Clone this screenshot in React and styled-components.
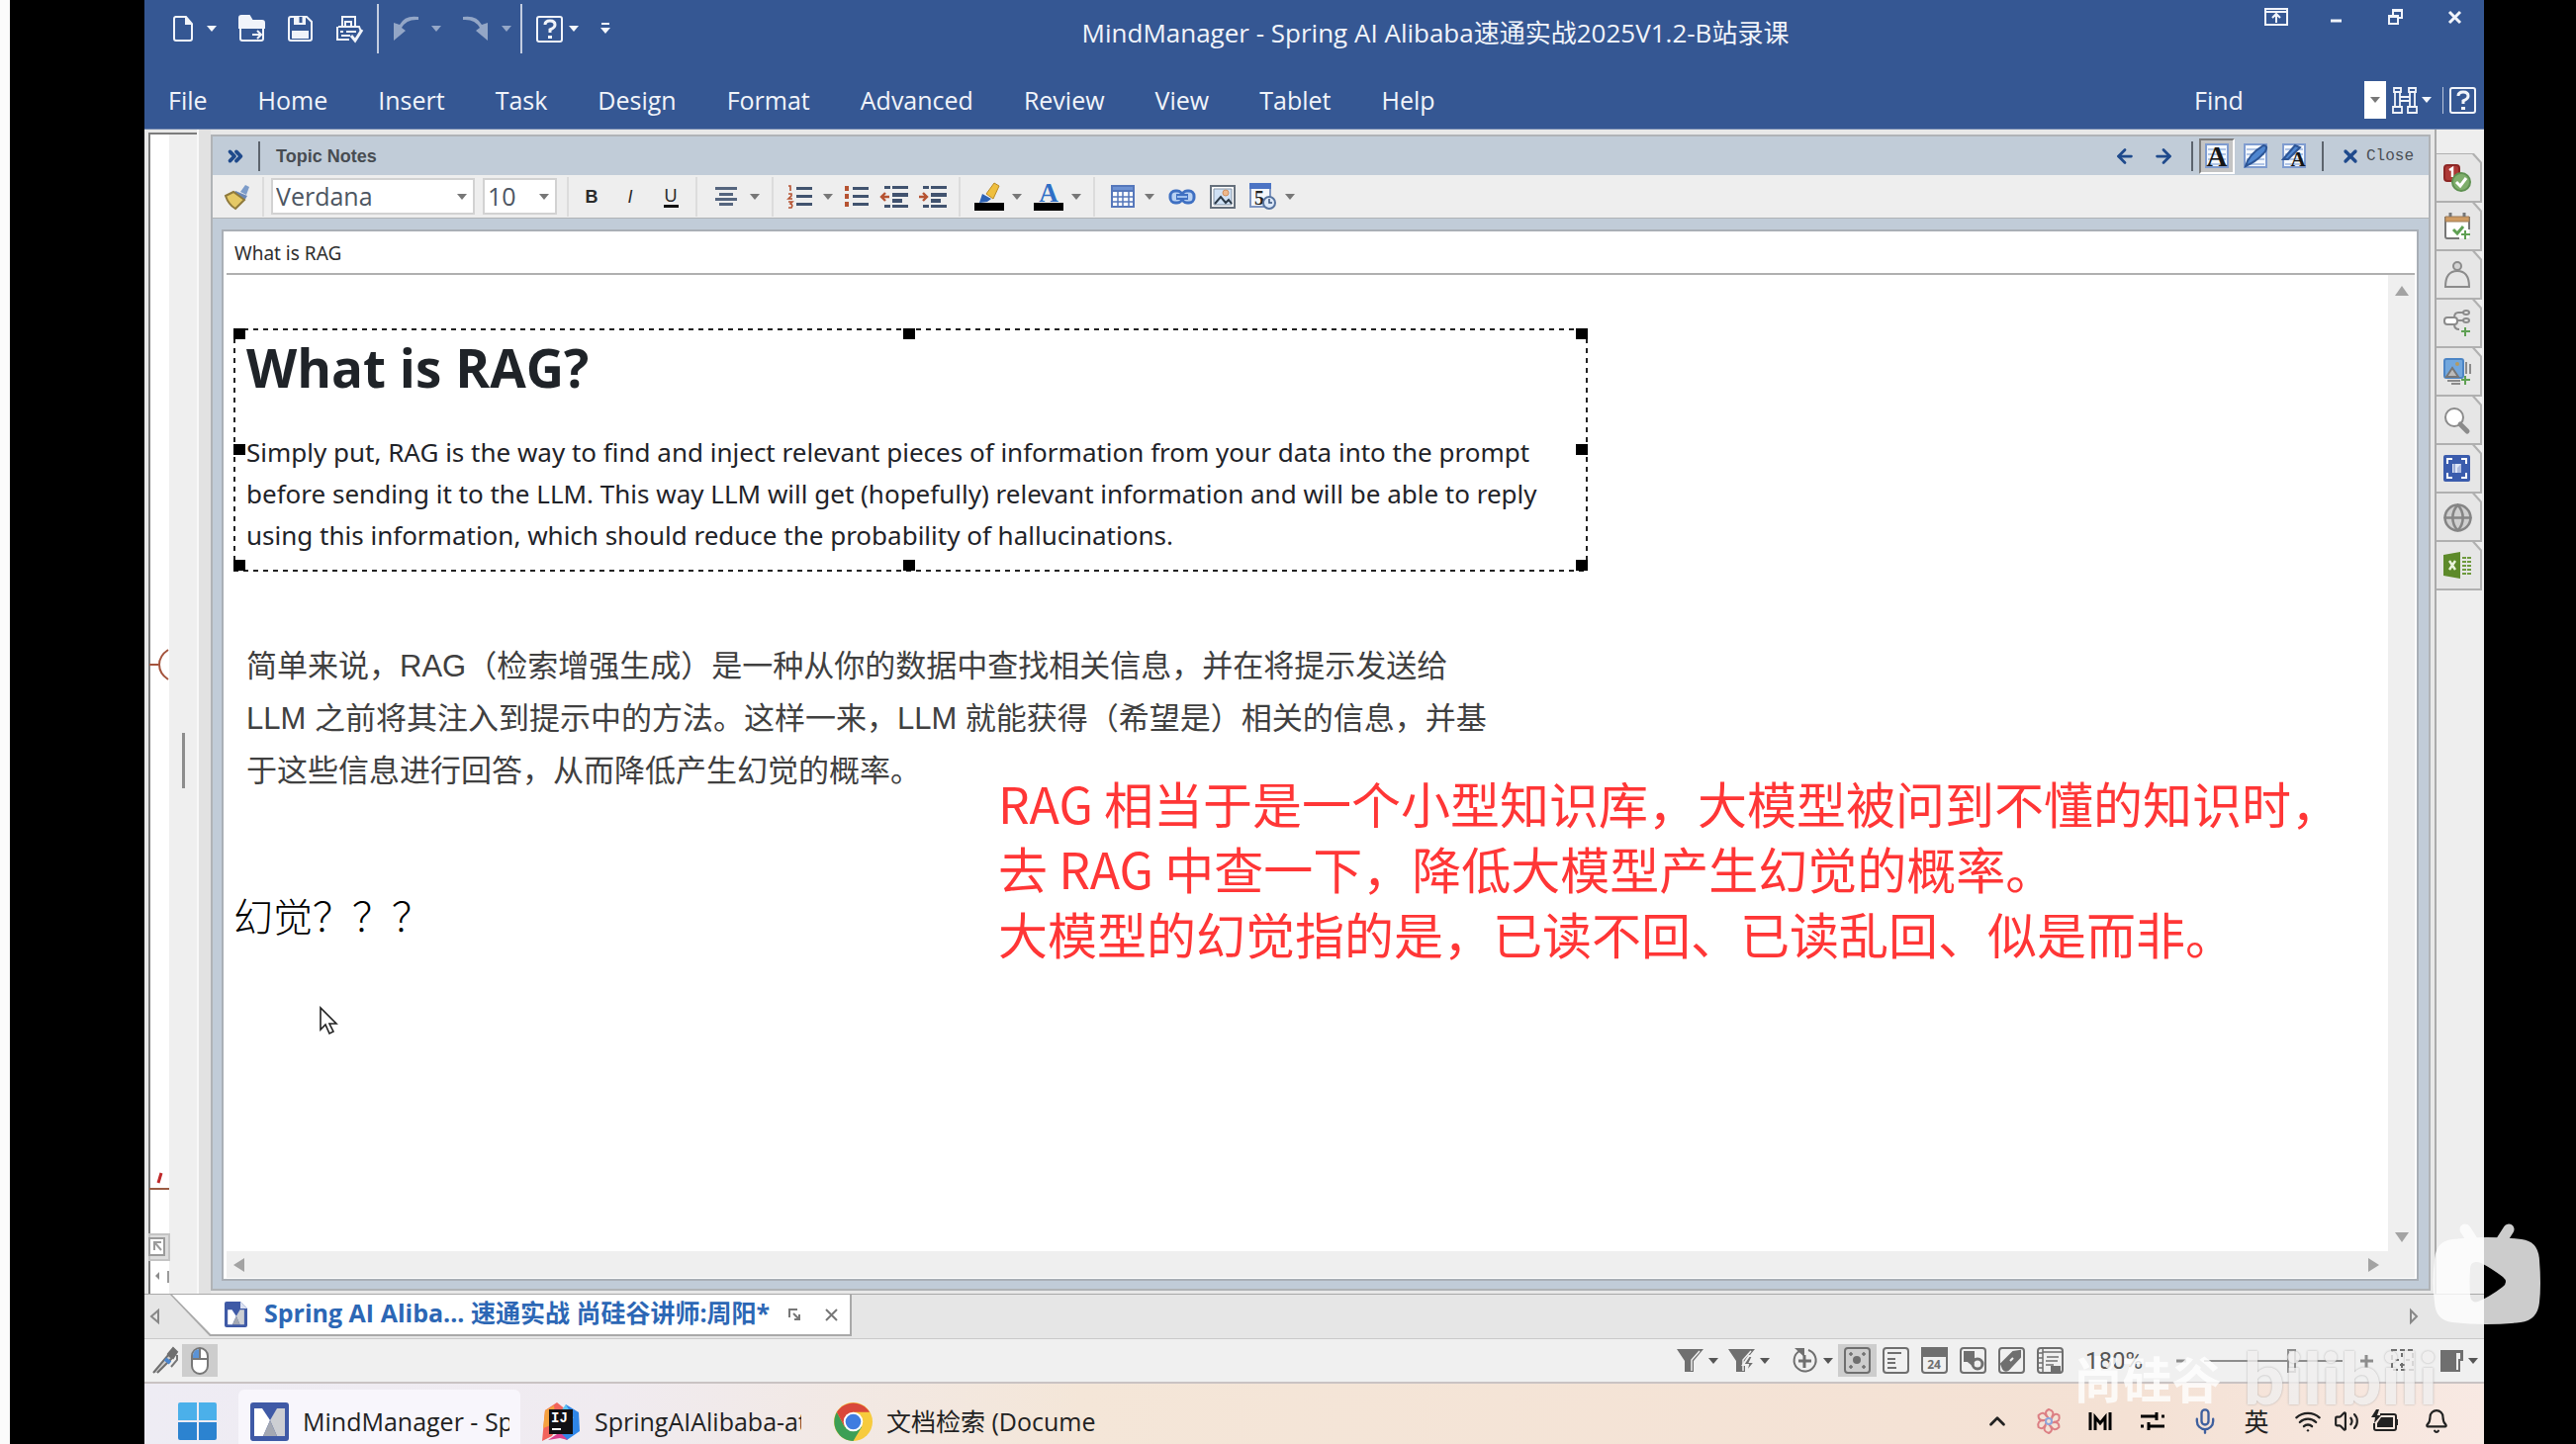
import React from 'react'
import styled, { createGlobalStyle } from 'styled-components'
import { ArrowLeft, ArrowRight, ChevronsRight, ChevronUp, X, Mic, Wifi, Volume2, Bell, Globe } from 'lucide-react'

const GlobalStyle = createGlobalStyle`
*{ box-sizing:border-box; }
body{
  margin:0;
  background:#000;
  font-family:"Open Sans","Noto Sans CJK SC",sans-serif;
}
button,input,select{
  font-family:inherit;
  color:inherit;
  background:none;
  border:0;
  border-radius:0;
  padding:0;
  margin:0;
}
svg{ display:block; flex:none; overflow:visible; }
`

const Page = styled.div`
position:relative;
display:flex;
min-height:100vh;
overflow:hidden;
background:#000;
padding-right:93px;
`
const PageEdge = styled.div`
width:10px;
background:#fbfbfb;
margin-right:136px;
`
const Window = styled.div`
flex:1;
min-width:0;
display:flex;
flex-direction:column;
background:#e6e6e6;
`

/* header */
const Header = styled.header`
height:131px;
background:#355793;
color:#f1f4fa;
border-bottom:1px solid #6f85ae;
`
const TitleBar = styled.div`
display:flex;
height:72px;
`
const QuickGroup = styled.div`
display:flex;
align-items:center;
gap:22px;
height:50px;
margin-top:4px;
padding:0 ${props => props.$end || 14}px 0 ${props => props.$start || 14}px;
border-left:${props => (props.$start ? 0 : 2)}px solid #c3cde0;
`
const Split = styled.button`
display:flex;
align-items:center;
gap:${props => props.$gap || 13}px;
opacity:${props => (props.disabled ? 0.5 : 1)};
`
const Title = styled.h1`
flex:1;
margin:14px 0 0;
text-align:center;
font-size:26px;
line-height:38px;
font-weight:400;
white-space:nowrap;
`
const WinButton = styled.button`
width:60px;
height:34px;
display:flex;
align-items:center;
justify-content:center;
`
const MenuBar = styled.nav`
display:flex;
align-items:center;
height:58px;
padding:0 8px 0 24px;
`
const MenuItem = styled.button`
font-size:25px;
line-height:34px;
margin-right:51px;
`
const FindInput = styled.input`
margin-left:auto;
width:172px;
font-size:25px;
line-height:34px;
outline:0;
`
const FindDrop = styled.button`
width:22px;
height:38px;
background:#fff;
display:flex;
align-items:center;
justify-content:center;
margin-right:6px;
`
const HelpButton = styled.button`
margin-left:11px;
padding-left:6px;
border-left:1px solid #b8c4dc;
`
const Caret = styled.span`
width:0;
height:0;
flex:none;
border-left:5px solid transparent;
border-right:5px solid transparent;
border-top:6px solid ${props => props.$color || '#777'};
`

/* work area */
const Work = styled.div`
flex:1;
display:flex;
min-height:0;
padding-left:4px;
background:#e8e8e8;
`
const MapStrip = styled.div`
position:relative;
width:49px;
margin-top:3px;
background:#fff;
border-left:2px solid #7c7c7c;
border-top:2px solid #7c7c7c;
display:flex;
justify-content:flex-end;
`
const MapScroll = styled.div`
width:28px;
background:#efefef;
display:flex;
align-items:center;
justify-content:center;
padding-top:94px;
`
const Grip = styled.div`
width:3px;
height:56px;
background:#8d8d8d;
`
const MapDrawing = styled.svg`
position:absolute;
left:-1px;
top:${props => props.$top};
`
const Splitter = styled.div`
width:14px;
background:#e2e2e2;
border-left:2px solid #f8f8f8;
`
const Panel = styled.section`
flex:1;
min-width:0;
margin:5px 4px 3px 0;
display:flex;
flex-direction:column;
background:#c1ccd8;
border:2px solid #b0b3b6;
`
const PanelHead = styled.div`
display:flex;
align-items:center;
height:39px;
padding:0 15px 0 12px;
color:#1f4a8c;
`
const PanelTitle = styled.h2`
flex:1;
margin:0 0 0 12px;
padding-left:16px;
border-left:2px solid #5c646d;
font:700 18px/30px "Liberation Sans",sans-serif;
color:#474c52;
`
const HeadButton = styled.button`
display:flex;
align-items:center;
justify-content:center;
width:36px;
height:36px;
margin:0 1px 0 2px;
${props => props.$on && 'background:#c4c4c4; border:2px solid #fff; border-top-color:#7d7d7d; border-left-color:#7d7d7d;'}
`
const HeadRule = styled.span`
width:2px;
height:30px;
background:#5c646d;
margin:0 ${props => props.$right || 4}px 0 9px;
`
const CloseButton = styled.button`
display:flex;
align-items:center;
gap:6px;
font:16px/24px "Liberation Mono",monospace;
span{ color:#4a4f55; }
svg{ color:#1f4a8c; }
`
const Toolbar = styled.div`
display:flex;
align-items:center;
height:44px;
background:#eee;
border-bottom:1px solid #b0b3b6;
`
const ToolGroup = styled.div`
display:flex;
align-items:center;
height:40px;
gap:${props => props.$gap || 12}px;
padding:0 ${props => props.$end || 12}px 0 ${props => props.$start || 14}px;
border-left:${props => (props.$first ? 0 : 2)}px solid #dcdcdc;
`
const SelectBox = styled.label`
position:relative;
width:${props => props.$w}px;
height:37px;
background:#fff;
border:2px solid #d2d2d2;
color:#4d5662;
select{
  appearance:none;
  width:100%;
  height:33px;
  padding-left:3px;
  font-size:25px;
  line-height:33px;
}
${Caret}{
  position:absolute;
  right:6px;
  top:14px;
  pointer-events:none;
}
`
const TextTool = styled.button`
width:${props => props.$w}px;
font:${props => props.$font} 18px/20px "Liberation Sans",sans-serif;
color:#2b2b2b;
span{
  display:inline-block;
  padding:0 1px;
  ${props => props.$under && 'border-bottom:3px solid #111; line-height:17px;'}
}
`
const Sheet = styled.div`
position:relative;
flex:1;
margin:11px 10px 8px 9px;
border:2px solid #a9afb6;
background:#fff;
display:grid;
grid-template-columns:1fr 27px;
grid-template-rows:44px 1fr 27px;
padding:0 2px 1px 3px;
`
const NoteTitle = styled.div`
grid-column:1 / 3;
border-bottom:2px solid #b0b0b0;
padding-left:8px;
font-family:"Noto Sans",sans-serif;
font-size:19px;
line-height:44px;
color:#2e2e2e;
`
const Note = styled.article`
position:relative;
padding:54px 0 0 7px;
`
const Selection = styled.div`
position:relative;
width:1369px;
height:246px;
padding:8px 13px;
color:#1f2328;
background:
  repeating-linear-gradient(90deg,#222 0 5px,transparent 5px 10px) 0 0 / 100% 2px no-repeat,
  repeating-linear-gradient(90deg,#222 0 5px,transparent 5px 10px) 0 100% / 100% 2px no-repeat,
  repeating-linear-gradient(#222 0 5px,transparent 5px 10px) 0 0 / 2px 100% no-repeat,
  repeating-linear-gradient(#222 0 5px,transparent 5px 10px) 100% 0 / 2px 100% no-repeat;
h3{
  margin:0;
  font-size:53px;
  line-height:64px;
}
p{
  margin:32px 0 0;
  font-family:"Noto Sans",sans-serif;
  font-size:26px;
  line-height:42px;
  white-space:nowrap;
}
`
const Handle = styled.i`
position:absolute;
width:12px;
height:11px;
background:#000;
left:${props => props.$x};
top:${props => props.$y};
`
const Translation = styled.p`
margin:69px 0 0 13px;
font:31px/53px "Liberation Sans","Noto Sans CJK SC",sans-serif;
color:#404040;
white-space:nowrap;
`
const Question = styled.p`
margin:91px 0 0;
font:300 40px/56px "Noto Sans CJK SC",sans-serif;
color:#000;
`
const Remark = styled.p`
position:absolute;
left:780px;
top:500px;
margin:0;
font:50px/66px "Noto Sans CJK SC",sans-serif;
color:#ff3636;
white-space:nowrap;
`
const Cursor = styled.svg`
position:absolute;
left:94px;
top:739px;
`
const VScroll = styled.div`
background:#efefef;
display:flex;
flex-direction:column;
align-items:center;
justify-content:space-between;
padding:11px 0 9px;
`
const HScroll = styled.div`
grid-column:1 / 3;
background:#efefef;
display:flex;
align-items:center;
justify-content:space-between;
padding:0 36px 0 7px;
`

/* task pane tabs */
const SideTabs = styled.aside`
width:50px;
background:#eee;
border-left:2px solid #ababab;
padding-top:24px;
`
const SideTab = styled.button`
position:relative;
display:flex;
align-items:center;
justify-content:center;
width:46px;
height:50px;
margin-bottom:-1px;
padding-right:4px;
background:#b0b0b0;
clip-path:polygon(0 0,38px 0,100% 9px,100% 100%,0 100%);
&:before{
  content:"";
  position:absolute;
  left:0;
  top:1px;
  right:2px;
  bottom:2px;
  background:#e6e6e6;
  clip-path:polygon(0 0,36px 0,100% 9px,100% 100%,0 100%);
}
svg{ position:relative; }
`

/* document tabs, status bar */
const DocTabs = styled.div`
display:flex;
align-items:flex-start;
height:46px;
border-top:1px solid #a9a9a9;
border-bottom:1px solid #c9c9c9;
padding-right:66px;
button{ align-self:center; }
`
const DocTab = styled.div`
display:flex;
align-items:center;
height:42px;
margin:0 auto 0 8px;
padding:0 2px 2px 0;
background:#a9a9a9;
clip-path:polygon(0 0,100% 0,100% 100%,40px 100%);
`
const DocTabInner = styled.div`
display:flex;
align-items:center;
height:100%;
padding:0 12px 0 55px;
background:#fff;
clip-path:polygon(2px 0,100% 0,100% 100%,41px 100%);
a{
  margin:0 18px 4px 17px;
  font-size:25px;
  line-height:36px;
  font-weight:700;
  color:#2c67b5;
  text-decoration:none;
}
button{ margin-right:24px; }
button:last-child{ margin-right:0; }
`
const StatusBar = styled.div`
display:flex;
align-items:center;
height:45px;
background:#f0f0f0;
border-bottom:2px solid #c9c3c3;
padding:0 6px 0 4px;
`
const StatusButton = styled.button`
display:flex;
align-items:center;
justify-content:center;
gap:5px;
height:33px;
padding:0 ${props => props.$pad || 0}px;
background:${props => (props.$on ? '#cdcdcd' : 'none')};
`
const StatusGroup = styled.div`
display:flex;
align-items:center;
gap:${props => props.$gap || 0}px;
margin-left:${props => props.$start || 0}px;
`
const Spacer = styled.div`
flex:1;
`
const Zoom = styled.div`
display:flex;
align-items:center;
margin:0 18px 0 16px;
gap:18px;
color:#555;
output{
  width:74px;
  font:24px/30px Roboto,sans-serif;
}
`
const Slider = styled.input`
appearance:none;
width:140px;
height:24px;
background:linear-gradient(#8d8d8d,#8d8d8d) center / 100% 2px no-repeat;
&::-webkit-slider-thumb{
  appearance:none;
  width:9px;
  height:24px;
  background:#f0f0f0;
  border:2px solid #8d8d8d;
}
`

/* taskbar */
const TaskBar = styled.footer`
display:flex;
align-items:center;
height:61px;
overflow:hidden;
padding:15px 22px 0 22px;
background:linear-gradient(90deg,#eeecf4 0,#f0ebf0 20%,#f4e6d8 40%,#f4e1d4 85%,#f8e9e3 100%);
color:#222;
`
const StartButton = styled.button`
padding:0 21px 0 12px;
`
const TaskLink = styled.a`
display:flex;
align-items:center;
gap:14px;
flex:none;
width:${props => props.$w || 285}px;
height:64px;
margin-right:10px;
padding:0 11px 0 12px;
border-radius:6px 6px 0 0;
background:${props => (props.$on ? '#f8f6fc' : 'none')};
color:#222;
text-decoration:none;
font-size:25px;
line-height:34px;
white-space:nowrap;
span{
  overflow:hidden;
}
`
const Tray = styled.div`
margin-left:auto;
display:flex;
align-items:center;
`
const TrayButton = styled.button`
display:flex;
align-items:center;
justify-content:center;
width:${props => props.$w || 52}px;
height:44px;
font-size:25px;
line-height:34px;
`

/* player overlay */
const Badge = styled.svg`
position:absolute;
right:35px;
bottom:120px;
`
const Watermark = styled.div`
position:absolute;
right:140px;
bottom:22px;
display:flex;
align-items:center;
gap:22px;
color:#fff;
opacity:0.8;
font:700 50px/60px "Noto Sans CJK SC",sans-serif;
pointer-events:none;
em{
  color:#f0efef;
  font:normal 900 73px/92px Lato,sans-serif;
  text-shadow:0 0 2px #999;
}
`

const Icon = ({ w = 26, h = 26, box, children, ...rest }) => (
  <svg width={w} height={h} viewBox={box || `0 0 ${w} ${h}`} fill='none' stroke='currentColor' strokeWidth='2' aria-hidden='true' {...rest}>
    {children}
  </svg>
)

const White = '#f4f7fc'

const NewIcon = () => (
  <Icon w={22} h={28}><path d='M3 2h11l6 7v15q0 2-2 2H4q-2 0-2-2V4q0-2 2-2z' /><path d='M13 1v9h8z' fill='currentColor' stroke='none' /></Icon>
)
const OpenIcon = () => (
  <Icon w={27} h={28}>
    <path d='M1 3q0-2 2-2h8l3 5h10q2 0 2 2v5H1z' fill='currentColor' />
    <path d='M2 13v11q0 2 2 2h19q2 0 2-2V13M14 20h9M19 16l4 4-4 4' />
  </Icon>
)
const SaveIcon = () => (
  <Icon w={27} h={28}>
    <path d='M2 4q0-2 2-2h16l5 5v17q0 2-2 2H4q-2 0-2-2z' />
    <path d='M7 1h12v9H7zM5 16h17v8H5z' fill='currentColor' stroke='none' /><path d='M14 2v6' stroke='#355793' strokeWidth='3' />
  </Icon>
)
const PrintIcon = () => (
  <Icon w={28} h={28}>
    <path d='M7 12V2h13v10M3 12h21l2 5M2 12v13h12M10 11V7h6v4M5 17h3M11 17h10M6 21h9' /><path d='M16 21l4 5 7-11' strokeWidth='3' />
  </Icon>
)
const UndoIcon = ({ flip }) => (
  <Icon w={26} h={28}><path d='M26 2Q12 0 7 10L1 8v18l12-10-4-3q5-9 17-8z' fill='currentColor' stroke='none' transform={flip ? 'translate(26 0) scale(-1 1)' : undefined} /></Icon>
)
const HelpIcon = () => (
  <Icon w={27} h={27}><rect x='1' y='1' width='25' height='25' rx='2' /><path d='M9 9q0-4 5-4t5 4q0 3-5 5v3' strokeWidth='3' /><path d='M12 20h4v3h-4z' fill='currentColor' stroke='none' /></Icon>
)
const RibbonIcon = () => <Icon w={24} h={18}><path d='M1 1h22v16H1zM1 4h22M12 15V7M8 10l4-4 4 4' /></Icon>
const RestoreIcon = () => <Icon w={15} h={16}><path d='M1 7h9v8H1zM5 6V1h9v8h-3M5 2h9M1 8h9' /></Icon>
const BinocularsIcon = () => (
  <Icon w={26} h={27}><path d='M2 1h7v4H2zM17 1h7v4h-7zM3 5v14M8 5v14M18 5v14M23 5v14M1 20h9v6H1zM16 20h9v6h-9zM8 10h10v4H8z' strokeWidth='1.8' /></Icon>
)

const BrushIcon = () => (
  <Icon w={26} h={26} stroke='none'><path d='M16 8l5-7 4 2-3 8z' fill='#7d9cc9' /><path d='M11 7l12 5-3 5-12-6z' fill='#6b87b5' /><path d='M1 12l8-4 11 8-9 9q-7-4-10-13z' fill='#e5c966' stroke='#8f7a3c' /></Icon>
)
const bars = (rows, color = '#41536f') => rows.map(([x, y, w, h = 3]) => <rect key={`${x}-${y}`} x={x} y={y} width={w} height={h} fill={color} stroke='none' />)
const AlignIcon = () => <Icon w={22} h={20}>{bars([[0, 0, 22], [4, 6, 14], [0, 11, 22], [4, 16, 14]], '#55657e')}</Icon>
const NumberedIcon = () => (
  <Icon w={26} h={26}>
    {bars([[9, 3, 16], [9, 11, 16], [9, 19, 16]])}
    <path d='M1 2h2v5M1 10h3v2l-3 3h4M1 18h4l-2 2q3 1 1 4H1' stroke='#b65332' strokeWidth='1.6' />
  </Icon>
)
const BulletIcon = () => (
  <Icon w={26} h={26}>{bars([[9, 3, 16], [9, 11, 16], [9, 19, 16]])}{bars([[1, 2, 4, 5], [1, 10, 4, 5], [1, 18, 4, 5]], '#b65332')}</Icon>
)
const IndentIcon = ({ out }) => (
  <Icon w={28} h={24}>
    {bars([[4, 1, 6], [12, 1, 16], [12, 8, 16, 4], [12, 14, 10, 4], [4, 20, 6], [12, 20, 16]])}
    <path d={out ? 'M9 12H2M5 8l-4 4 4 4' : 'M0 12h7M4 8l4 4-4 4'} stroke='#b65332' strokeWidth='2.4' />
  </Icon>
)
const HighlightIcon = () => (
  <Icon w={30} h={30} stroke='none'><path d='M12 12L20 1l5 3-6 13z' fill='#efbf3e' stroke='#b98a26' strokeWidth='1' /><path d='M8 12l9 5-4 3-8 1z' fill='#2d62b5' /><path d='M0 21h30v8H0z' fill='#000' /></Icon>
)
const FontColorIcon = () => (
  <Icon w={30} h={30} stroke='none'>
    <text x='15' y='20' textAnchor='middle' fontFamily='Liberation Serif' fontWeight='700' fontSize='27' fill='#2f6fc6'>A</text>
    <path d='M0 21h30v8H0z' fill='#000' />
  </Icon>
)
const TableIcon = () => (
  <Icon w={24} h={24} stroke='#5577bb'><path d='M1 2h22v20H1z' fill='#fff' /><path d='M1 1h22v5H1z' fill='#6d92d3' /><path d='M1 12h22M1 17h22M7 6v17M12 6v17M18 6v17' strokeWidth='1.5' /></Icon>
)
const LinkIcon = () => (
  <Icon w={28} h={18} stroke='#3f70c2' strokeWidth='3'><rect x='2' y='3' width='12' height='12' rx='5' fill='#b8d1f3' /><rect x='14' y='3' width='12' height='12' rx='5' fill='#b8d1f3' /><path d='M8 9h12' strokeWidth='6' /><path d='M9 9h10' stroke='#9fc0ee' strokeWidth='2' /></Icon>
)
const PictureIcon = () => (
  <Icon w={26} h={24} stroke='#66707c'><path d='M1 1h24v22H1z' fill='#fff' /><path d='M4 4h18v16H4z' fill='#cfe1f5' stroke='#8795a6' strokeWidth='1' /><circle cx='16' cy='8' r='3' fill='#eeb98d' stroke='#cf8e5f' strokeWidth='1' /><path d='M5 19l6-7 5 6 3-3 3 4' stroke='#2b3947' /></Icon>
)
const DateIcon = () => (
  <Icon w={27} h={28} stroke='none'>
    <path d='M1 1h20v23H1z' fill='#f3f6fb' stroke='#7f96c2' /><path d='M0 0h22v6H0z' fill='#4c74c4' />
    <text x='10' y='22' textAnchor='middle' fontFamily='Liberation Serif' fontWeight='700' fontSize='20' fill='#222'>5</text>
    <circle cx='20' cy='20' r='6' fill='#dce8f8' stroke='#56739f' strokeWidth='2' /><path d='M20 16v4h3' stroke='#34507c' strokeWidth='1.5' />
  </Icon>
)
const ViewIcon = ({ mode }) => (
  <Icon w={24} h={25} stroke='none'>
    <path d='M1 1h22v23H1z' fill='#f4f8fe' stroke='#7f9cd0' strokeWidth='2' />
    <path d='M3 6h18M3 11h18M3 16h18M3 21h18' stroke='#b2c6e6' />
    {mode !== 'text' && <path d={mode === 'pen' ? 'M2 23Q5 11 20 2q5 0 2 6Q14 18 2 23z' : 'M1 16L13 2l5 2-12 12z'} fill='#4f86cf' stroke='#2c5596' />}
    {mode !== 'pen' && <text x={mode === 'text' ? 12 : 16} y='23' textAnchor='middle' fontFamily='Liberation Serif' fontWeight='700' fontSize={mode === 'text' ? 29 : 21} fill='#151515'>A</text>}
  </Icon>
)

const plus = <path d='M18 22h9M22 18v9' stroke='#5fa053' />
const sideIcons = {
  'Task Info': <Icon w={28} h={28} stroke='none'><rect x='1' y='1' width='15' height='16' rx='3' fill='#ad3936' stroke='#8d2725' /><path d='M6 6l3-2v9' stroke='#fff' strokeWidth='2.5' /><circle cx='18' cy='18' r='9' fill='#7fae6c' stroke='#5e9151' /><path d='M13 18l4 4 6-8' stroke='#fff' strokeWidth='3' /></Icon>,
  Calendar: <Icon w={28} h={28} stroke='#777'><path d='M2 4h24v22H4q-2 0-2-2z' fill='#fff' stroke='none' /><path d='M26 4v13M2 4v20q0 2 2 2h12' /><path d='M2 4h24v5H2z' fill='#cf9b62' stroke='#9c7b56' strokeWidth='1' /><path d='M7 0v4M21 0v4' strokeWidth='3' /><path d='M10 17l4 4 6-7' stroke='#5fa053' strokeWidth='3' />{plus}</Icon>,
  Resources: <Icon w={28} h={28} stroke='#8b8b8b'><circle cx='14' cy='5' r='4' fill='#d4d4d4' /><path d='M2 26q0-16 12-16t12 16z' /></Icon>,
  'Map Parts': <Icon w={28} h={28} stroke='#8b8b8b'><rect x='1' y='8' width='13' height='7' rx='3' fill='#fff' /><path d='M14 11h6M11 8q0-5 4-5h5M11 15q0 5 5 5' /><ellipse cx='23' cy='3' rx='3' ry='2' /><ellipse cx='23' cy='11' rx='3' ry='2' />{plus}</Icon>,
  Images: <Icon w={28} h={28} stroke='#8b8b8b'><rect x='1' y='1' width='19' height='19' rx='2' fill='#72a7dd' stroke='#4c85c5' /><path d='M3 19l6-9 6 9z' fill='#bbb' stroke='#777' /><circle cx='14' cy='6' r='2' fill='#b59a60' stroke='none' /><path d='M23 4v12M27 6v10M4 23h13M8 26h9' />{plus}</Icon>,
  Search: <Icon w={28} h={28} stroke='#8b8b8b'><circle cx='11' cy='11' r='9' fill='#fff' /><path d='M17 18l7 7' strokeWidth='5' strokeLinecap='round' /></Icon>,
  Capture: <Icon w={28} h={28} stroke='#fff'><rect width='27' height='27' rx='2' fill='#3b5cad' stroke='none' /><path d='M4 9V4h5M18 4h5v5M23 18v5h-5M9 23H4v-5' /><path d='M9 9h9v9H9z' fill='#dfe6f6' stroke='none' /><path d='M11 9v9' stroke='#5c74b8' strokeWidth='1' /><path d='M14 13l4-4v9h-4z' fill='#aebbe0' stroke='none' /></Icon>,
  Browser: <Globe width={31} height={31} color='#858585' fill='#cfcfcf' strokeWidth={2} />,
  Excel: <Icon w={28} h={28} stroke='none'><path d='M0 3l17-3v27L0 24z' fill='#5d8a2a' /><path d='M6 9l6 9M12 9l-6 9' stroke='#e9f3dc' strokeWidth='2.4' /><path d='M21 5v19M26 5v19' stroke='#6f9a3e' strokeWidth='4' strokeDasharray='2 2' /></Icon>,
}

const gray = '#6f6f6f'
const emblem = (
  <>
    <path d='M4 6h8l8 12-7 16H4z' fill='#fff' />
    <path d='M35 6h-8l-7 12 7 16h8z' fill='#cdcfd3' />
    <path d='M20 18l7 16H13z' fill='#a4a8b2' />
  </>
)
const MMIcon = () => (
  <Icon w={39} h={39} stroke='none'><rect width='39' height='39' rx='3' fill='#3f5aa6' />{emblem}</Icon>
)
const DocIcon = () => (
  <Icon w={23} h={26} stroke='none'><path d='M2 0h14l7 7v17q0 2-2 2H2q-2 0-2-2V2q0-2 2-2z' fill='#3f5aa6' /><path d='M16 0v7h7z' fill='#d9dff0' /><g transform='translate(1 5) scale(0.54)'>{emblem}</g></Icon>
)
const FilterIcon = ({ bolt }) => (
  <Icon w={27} h={26} stroke='none'><path d='M0 1h27L17 13v11H8V13z' fill={gray} /><path d='M23 3l-8 9v11' stroke='#f0f0f0' strokeWidth='1.5' />{bolt && <path d='M21 8l-6 9h5l-2 8 9-11h-5l3-6z' fill={gray} stroke='#f0f0f0' />}</Icon>
)
const boxed = children => <Icon w={27} h={27} stroke={gray}><rect x='1' y='1' width='25' height='25' rx='3' />{children}</Icon>
const statusIcons = {
  Map: boxed(<><circle cx='13' cy='13' r='4' fill={gray} stroke='none' /><path d='M5 7h4M7 5v4M18 7h4M20 5v4M5 20h4M7 18v4M18 20h4M20 18v4' strokeWidth='1.5' /></>),
  Outline: boxed(<path d='M5 6h14M5 12h8M5 16h8M5 21h9' />),
  Schedule: boxed(<><path d='M1 1h25v8H1z' fill={gray} /><text x='13' y='22' textAnchor='middle' fontFamily='Open Sans' fontWeight='700' fontSize='12' fill={gray} stroke='none'>24</text></>),
  Linked: boxed(<><path d='M5 5h9v9H5z' fill={gray} /><circle cx='18' cy='17' r='5' strokeWidth='3' /><path d='M9 14l5 4' strokeWidth='3' /></>),
  Tags: boxed(<><path d='M3 17L15 5l7-1v6L10 23q-3 2-5-1z' fill={gray} /><path d='M12 14l3-3' stroke='#f0f0f0' /></>),
  Gantt: boxed(<><path d='M6 1v25M1 6h5M1 11h5M1 16h5M1 21h5M6 5h20M10 10h12M9 14h12M9 18h8' strokeWidth='1.5' /><path d='M15 20h8v6h-8z' fill={gray} /></>),
}

const menus = ['File', 'Home', 'Insert', 'Task', 'Design', 'Format', 'Advanced', 'Review', 'View', 'Tablet', 'Help']

const Triangle = ({ d, w = 12, h = 12 }) => <Icon w={w} h={h} stroke='none'><path d={d} fill='#a3a3a3' /></Icon>

const TopBar = () => (
  <Header>
    <TitleBar>
      <QuickGroup $start={28}>
        <Split aria-label='New'><NewIcon /><Caret $color={White} /></Split>
        <Split aria-label='Open'><OpenIcon /></Split>
        <Split aria-label='Save'><SaveIcon /></Split>
        <Split aria-label='Print'><PrintIcon /></Split>
      </QuickGroup>
      <QuickGroup $end={9}>
        <Split aria-label='Undo' disabled><UndoIcon /><Caret $color={White} /></Split>
        <Split aria-label='Redo' disabled><UndoIcon flip /><Caret $color={White} /></Split>
      </QuickGroup>
      <QuickGroup>
        <Split aria-label='Help' $gap={6}><HelpIcon /><Caret $color={White} /></Split>
        <Split aria-label='Customize'><Icon w={10} h={12} stroke='none'><path d='M1 0h8v2H1zM0 5h10l-5 6z' fill={White} /></Icon></Split>
      </QuickGroup>
      <Title>MindManager - Spring AI Alibaba速通实战2025V1.2-B站录课</Title>
      <WinButton aria-label='Ribbon options'><RibbonIcon /></WinButton>
      <WinButton aria-label='Minimize'><Icon w={11} h={12}><path d='M0 10h11' strokeWidth='3' /></Icon></WinButton>
      <WinButton aria-label='Restore'><RestoreIcon /></WinButton>
      <WinButton aria-label='Close window'><Icon w={13} h={13} strokeWidth='3'><path d='M1 1l11 11M12 1L1 12' /></Icon></WinButton>
    </TitleBar>
    <MenuBar>
      {menus.map(name => <MenuItem key={name}>{name}</MenuItem>)}
      <FindInput aria-label='Find' defaultValue='Find' />
      <FindDrop aria-label='Find history'><Caret /></FindDrop>
      <Split aria-label='Search' $gap={4}><BinocularsIcon /><Caret $color={White} /></Split>
      <HelpButton aria-label='Help'><HelpIcon /></HelpButton>
    </MenuBar>
  </Header>
)

const NotesToolbar = () => (
  <Toolbar>
    <ToolGroup $first $start={12}><Split aria-label='Format painter'><BrushIcon /></Split></ToolGroup>
    <ToolGroup $start={7} $end={10} $gap={8}>
      <SelectBox $w={206}><select aria-label='Font'><option>Verdana</option></select><Caret /></SelectBox>
      <SelectBox $w={75}><select aria-label='Font size'><option>10</option></select><Caret /></SelectBox>
    </ToolGroup>
    <ToolGroup $start={3} $end={3} $gap={1}>
      <TextTool $w={40} $font='900'><span>B</span></TextTool>
      <TextTool $w={36} $font='italic'><span>I</span></TextTool>
      <TextTool $w={44} $font='400' $under><span>U</span></TextTool>
    </ToolGroup>
    <ToolGroup $start={18}><Split aria-label='Align'><AlignIcon /><Caret /></Split></ToolGroup>
    <ToolGroup $gap={11}>
      <Split aria-label='Numbered list' $gap={10}><NumberedIcon /><Caret /></Split>
      <Split aria-label='Bulleted list'><BulletIcon /></Split>
      <Split aria-label='Outdent'><IndentIcon out /></Split>
      <Split aria-label='Indent'><IndentIcon /></Split>
    </ToolGroup>
    <ToolGroup>
      <Split aria-label='Highlight' $gap={8}><HighlightIcon /><Caret /></Split>
      <Split aria-label='Font color' $gap={8}><FontColorIcon /><Caret /></Split>
    </ToolGroup>
    <ToolGroup $start={16} $gap={14}>
      <Split aria-label='Table' $gap={10}><TableIcon /><Caret /></Split>
      <Split aria-label='Link'><LinkIcon /></Split>
      <Split aria-label='Picture'><PictureIcon /></Split>
      <Split aria-label='Date' $gap={9}><DateIcon /><Caret /></Split>
    </ToolGroup>
  </Toolbar>
)

const handles = [
  ['0px', '0px'], ['677px', '0px'], ['1357px', '0px'],
  ['0px', '117px'], ['1357px', '117px'],
  ['0px', '234px'], ['677px', '234px'], ['1357px', '234px'],
]

const NoteSheet = () => (
  <Sheet>
    <NoteTitle>What is RAG</NoteTitle>
    <Note>
      <Selection>
        <h3>What is RAG?</h3>
        <p>
          Simply put, RAG is the way to find and inject relevant pieces of information from your data into the prompt<br />
          before sending it to the LLM. This way LLM will get (hopefully) relevant information and will be able to reply<br />
          using this information, which should reduce the probability of hallucinations.
        </p>
        {handles.map(([x, y]) => <Handle key={x + y} $x={x} $y={y} />)}
      </Selection>
      <Translation>
        简单来说，RAG（检索增强生成）是一种从你的数据中查找相关信息，并在将提示发送给<br />
        LLM 之前将其注入到提示中的方法。这样一来，LLM 就能获得（希望是）相关的信息，并基<br />
        于这些信息进行回答，从而降低产生幻觉的概率。
      </Translation>
      <Question>幻觉？？？</Question>
      <Remark>
        RAG 相当于是一个小型知识库，大模型被问到不懂的知识时，<br />
        去 RAG 中查一下，降低大模型产生幻觉的概率。<br />
        大模型的幻觉指的是，已读不回、已读乱回、似是而非。
      </Remark>
      <Cursor width='20' height='30' viewBox='0 0 20 30'><path d='M1 2v22l5-5 4 9 4-2-4-8h7z' fill='#fff' stroke='#222' strokeWidth='1.6' /></Cursor>
    </Note>
    <VScroll><Triangle d='M6 0l7 10H-1z' /><Triangle d='M-1 2h14l-7 10z' /></VScroll>
    <HScroll><Triangle w={11} h={14} d='M11 0v14L0 7z' /><Triangle w={11} h={14} d='M0 0v14l11-7z' /></HScroll>
  </Sheet>
)

const NotesPanel = () => (
  <Panel>
    <PanelHead>
      <ChevronsRight width={22} height={22} strokeWidth={4} />
      <PanelTitle>Topic Notes</PanelTitle>
      <HeadButton aria-label='Back'><ArrowLeft width={22} height={22} strokeWidth={3} /></HeadButton>
      <HeadButton aria-label='Forward'><ArrowRight width={22} height={22} strokeWidth={3} /></HeadButton>
      <HeadRule />
      <HeadButton $on aria-label='Text'><ViewIcon mode='text' /></HeadButton>
      <HeadButton aria-label='Ink'><ViewIcon mode='pen' /></HeadButton>
      <HeadButton aria-label='Ink and text'><ViewIcon mode='both' /></HeadButton>
      <HeadRule $right={17} />
      <CloseButton><X width={20} height={20} strokeWidth={4} /><span>Close</span></CloseButton>
    </PanelHead>
    <NotesToolbar />
    <NoteSheet />
  </Panel>
)

const Status = () => (
  <StatusBar>
    <StatusButton aria-label='Pen' $pad={4}>
      <Icon w={26} h={28} stroke={gray}><path d='M1 26L16 8l4 3L5 26' fill='#ccc' /><path d='M16 7l5-6 4 4-4 6z' fill={gray} /><path d='M25 8v5l-6 7' stroke='#777' /><path d='M13 12l5 4' stroke='#4a86cf' strokeWidth='4' /></Icon>
    </StatusButton>
    <StatusButton aria-label='Mouse' $on $pad={9}>
      <Icon w={18} h={28} stroke='#777'><rect x='1' y='1' width='16' height='26' rx='8' fill='#fff' /><path d='M9 2v10H2V8q1-6 7-6z' fill='#5b93d6' stroke='none' /><path d='M9 1v11M1 12h16' /></Icon>
    </StatusButton>
    <Spacer />
    <StatusButton aria-label='Filter' $pad={5}><FilterIcon /><Caret $color='#555' /></StatusButton>
    <StatusButton aria-label='Quick filter' $pad={5}><FilterIcon bolt /><Caret $color='#555' /></StatusButton>
    <StatusGroup $start={12}>
      <StatusButton aria-label='Detail' $pad={5}>
        <Icon w={27} h={27} stroke={gray}><path d='M17 3a11 11 0 1 1-9 1' /><path d='M3 1h10v9z' fill={gray} stroke='none' /><path d='M7 14h13M13 8v13' strokeWidth='3' /></Icon>
        <Caret $color='#555' />
      </StatusButton>
      {Object.entries(statusIcons).map(([name, icon]) => <StatusButton key={name} aria-label={name} $pad={6} $on={name === 'Map'}>{icon}</StatusButton>)}
    </StatusGroup>
    <Zoom>
      <output>180%</output>
      <Icon w={10} h={14} stroke='#8d8d8d'><path d='M0 7h10' strokeWidth='3' /></Icon>
      <Slider type='range' aria-label='Zoom' min='0' max='100' defaultValue='64' />
      <Icon w={13} h={14} stroke='#8d8d8d'><path d='M0 7h13M6 1v13' strokeWidth='3' /></Icon>
    </Zoom>
    <StatusGroup $gap={26}>
      <StatusButton aria-label='Fit map'>
        <Icon w={24} h={23} stroke={gray}><rect x='1' y='1' width='21' height='20' strokeDasharray='5 3' /><path d='M11 4v4M11 14v5M4 11h4M15 11h4M9 16h5' /></Icon>
      </StatusButton>
      <StatusButton aria-label='Panels'>
        <Icon w={23} h={22} stroke={gray}><path d='M1 1h21v9h-3v11H1z' fill={gray} /><path d='M16 3h4v6h-2v11h-2z' fill='#f0f0f0' stroke='none' /></Icon>
        <Caret $color='#555' />
      </StatusButton>
    </StatusGroup>
  </StatusBar>
)

const Tasks = () => (
  <TaskBar>
    <StartButton aria-label='Start'>
      <Icon w={40} h={40} stroke='none'><path d='M2 1h17v18H0V3q0-2 2-2zM21 1h16q2 0 2 2v16H21z' fill='#4bb0ea' /><path d='M0 21h19v18H2q-2 0-2-2zM21 21h18v16q0 2-2 2H21z' fill='#2c83d0' /></Icon>
    </StartButton>
    <TaskLink href='#mindmanager' $on><MMIcon /><span>MindManager - Spring</span></TaskLink>
    <TaskLink href='#idea'>
      <Icon w={39} h={39} stroke='none'><path d='M3 8L15 0l10 8L10 34 0 39z' fill='#f2635c' /><path d='M3 8l9-5 2 18L1 26z' fill='#f5a13e' /><path d='M24 2l13 8 1 19-13 9-10-6z' fill='#2f86e8' /><path d='M24 2l-6 8 14 6z' fill='#5fc4f0' /><path d='M6 38l12-8 8 8-8-2z' fill='#d9408e' /><path d='M7 7h24v25H7z' fill='#101014' /><text x='9' y='20' fontFamily='Liberation Mono' fontWeight='700' fontSize='14' fill='#fff'>IJ</text><path d='M10 27h9' stroke='#fff' strokeWidth='2' /></Icon>
      <span>SpringAIAlibaba-atguigu</span>
    </TaskLink>
    <TaskLink href='#chrome' $w={300}>
      <Icon w={39} h={39} box='0 0 40 40' stroke='none'><circle cx='20' cy='20' r='20' fill='#f7cb3d' /><path d='M3 10A20 20 0 0 0 20 40L29 25 11 25z' fill='#3c9f55' /><path d='M3 10A20 20 0 0 1 37 10H20L11 25z' fill='#d9483b' /><circle cx='20' cy='20' r='10' fill='#fff' /><circle cx='20' cy='20' r='8' fill='#3f7de0' /></Icon>
      <span>文档检索 (Docume</span>
    </TaskLink>
    <Tray>
      <TrayButton aria-label='Hidden icons'><ChevronUp width={26} height={26} strokeWidth={2.5} /></TrayButton>
      <TrayButton aria-label='Assistant'>
        <Icon w={28} h={28} stroke='#dc7f84'>{[0, 60, 120, 180, 240, 300].map(a => <path key={a} d='M14 11Q8 5 14 2q7 2 3 8' transform={`rotate(${a} 14 14)`} />)}<circle cx='14' cy='14' r='3' stroke='#8ca6dc' /></Icon>
      </TrayButton>
      <TrayButton aria-label='Meter'><Icon w={24} h={20} stroke='#000'><path d='M2 1v18M22 1v18M7 19V6l5 6 5-6v13' strokeWidth='3' /></Icon></TrayButton>
      <TrayButton aria-label='Settings' $w={54}><Icon w={24} h={20} strokeWidth='3' stroke='#000'><path d='M0 5h17M21 5h3M16 1v8M0 15h3M8 15h16M8 11v8' /></Icon></TrayButton>
      <TrayButton aria-label='Microphone'><Mic width={28} height={28} color='#3e5f9e' strokeWidth={2} /></TrayButton>
      <TrayButton>英</TrayButton>
      <TrayButton aria-label='Network'><Wifi width={28} height={28} /></TrayButton>
      <TrayButton aria-label='Volume' $w={26}><Volume2 width={26} height={26} /></TrayButton>
      <TrayButton aria-label='Battery'>
        <Icon w={28} h={24}><path d='M9 5h14q2 0 2 2v12q0 2-2 2H5q-2 0-2-2v-5M26 10v6' /><path d='M10 8h12v10H6v-4z' fill='#222' stroke='none' /><path d='M5 0L0 8h4l-1 6 7-8H6l2-6z' fill='#222' stroke='none' /></Icon>
      </TrayButton>
      <TrayButton aria-label='Notifications'><Bell width={26} height={26} /></TrayButton>
    </Tray>
  </TaskBar>
)

const App = () => {
  return (
    <Page>
      <GlobalStyle />
      <PageEdge />
      <Window>
        <TopBar />
        <Work>
          <MapStrip>
            <MapDrawing $top='520px' width='20' height='32' viewBox='0 0 20 32' fill='none' stroke='#a4533c' strokeWidth='2'><path d='M0 16h9M19 1Q10 7 10 16t9 15' /></MapDrawing>
            <MapDrawing $top='1048px' width='20' height='26' viewBox='0 0 20 26' fill='none'><path d='M12 2L9 12' stroke='#c0292b' strokeWidth='3' /><path d='M0 18h20' stroke='#9a5b43' strokeWidth='2' /></MapDrawing>
            <MapDrawing $top='1109px' width='20' height='62' viewBox='0 0 20 62' fill='none' stroke='#9b9b9b' strokeWidth='2'><path d='M0 3h20v26H0z' fill='#ddd' stroke='#c4c4c4' /><path d='M0 7h15v17H0z' fill='#fff' /><path d='M5 19v-8h7M6 12l6 7' /><path d='M19 40v12' /><path d='M10 41v8l-4-4z' fill='#8b8b8b' stroke='none' /></MapDrawing>
            <MapScroll><Grip /></MapScroll>
          </MapStrip>
          <Splitter />
          <NotesPanel />
          <SideTabs>
            {Object.entries(sideIcons).map(([name, icon]) => <SideTab key={name} aria-label={name}>{icon}</SideTab>)}
          </SideTabs>
        </Work>
        <DocTabs>
          <button aria-label='Previous tab'><Icon w={18} h={16} stroke='#888'><path d='M14 2v12L7 8z' /></Icon></button>
          <DocTab>
            <DocTabInner>
              <DocIcon />
              <a href='#doc'>Spring AI Aliba... 速通实战 尚硅谷讲师:周阳*</a>
              <button aria-label='Detach'><Icon w={14} h={14} stroke='#777'><path d='M2 10V2h8M6 6l6 6M12 7v5H7' /></Icon></button>
              <button aria-label='Close tab'><Icon w={13} h={13} stroke='#777'><path d='M1 1l11 11M12 1L1 12' /></Icon></button>
            </DocTabInner>
          </DocTab>
          <button aria-label='Next tab'><Icon w={10} h={16} stroke='#888'><path d='M2 2v12l6-6z' /></Icon></button>
        </DocTabs>
        <Status />
        <Tasks />
      </Window>
      <Watermark><span>尚硅谷</span><em>bilibili</em></Watermark>
      <Badge width='110' height='104' viewBox='0 0 110 104'>
        <g opacity='0.8' fill='#fff'>
          <path d='M33 7l9 14M77 7L68 21' stroke='#fff' strokeWidth='11' strokeLinecap='round' fill='none' />
          <path fillRule='evenodd' d='M20 17Q55 13 90 17 107 19 108 38q2 25 0 43-2 18-19 20-35 4-69 0Q3 99 2 81-1 60 2 38 3 19 20 17zM44 40q-6 0-6 7-1 13 0 27 1 8 8 6 12-5 25-15 6-5 0-10Q59 46 49 41q-2-1-5-1z' />
        </g>
      </Badge>
    </Page>
  )
}

export default App
